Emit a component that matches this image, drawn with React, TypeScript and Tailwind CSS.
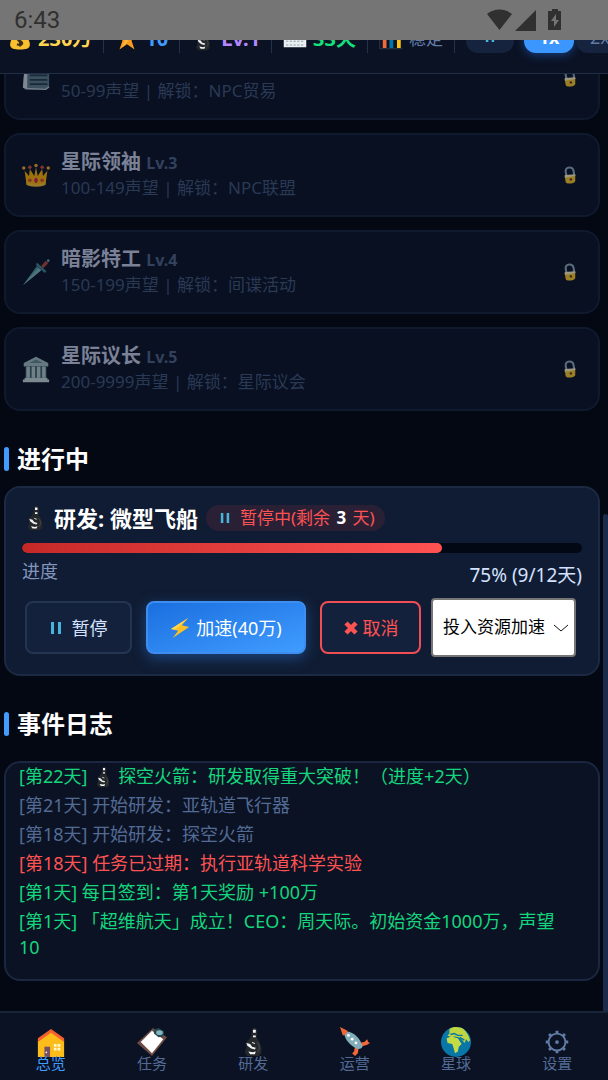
import React from 'react';

type IconProps = { className?: string };

const MoneyBagIcon: React.FC<IconProps> = ({ className }) => (
  <svg viewBox="0 0 32 32" className={className} aria-hidden="true">
    <path d="M11 3h10l-2 6h-6z" fill="#f9a825" />
    <path d="M13 8h6c7 5 11 11 10 17-1 4-5 5-13 5S4 29 3 25C2 19 6 13 13 8z" fill="#fbc02d" />
    <path d="M19 15c-5-3-8 3-3 4s3 7-4 4M16 12v14" stroke="#3e2f1c" strokeWidth="3" fill="none" />
  </svg>
);

const StarIcon: React.FC<IconProps> = ({ className }) => (
  <svg viewBox="0 0 32 32" className={className} aria-hidden="true">
    <path d="M16 2l4 10h9l-7 6 4 12-10-7-10 7 4-12-7-6h9z" fill="#fb9a1c" />
    <path d="M16 8l2 8-2 5-7 6 4-9z" fill="#ffb840" />
  </svg>
);

const MicroscopeIcon: React.FC<IconProps> = ({ className }) => (
  <svg viewBox="0 0 32 32" className={className} aria-hidden="true">
    <path d="M16 1h3l2 3-1 7 3 5 2 6v6l-3 3H10l-3-4 2-5-1-5 4-4 2-4 1-6z" fill="#25282b" />
    <path d="M16 3h3v3h-3zM16 9h3v2h-3z" fill="#f5f5f5" />
    <path d="M9 17l4 1 2 3 4 1-1 2-4-1-4-3z" fill="#eceff1" />
    <path d="M15 16l3 1v1l-3-1zM11 26l5 1 3-1-1 3h-5z" fill="#f5f5f5" />
    <path d="M20 16c4 4 3 8 1 11" stroke="#4a4f52" strokeWidth="1" fill="none" />
  </svg>
);

const CalendarIcon: React.FC<IconProps> = ({ className }) => (
  <svg viewBox="0 0 32 32" className={className} aria-hidden="true">
    <rect x="1" y="4" width="30" height="23" fill="#eceff1" />
    <rect x="1" y="4" width="30" height="5" fill="#e53935" />
    <path d="M4 19h24M4 24h24" stroke="#90a4ae" strokeWidth="1.5" strokeDasharray="3 2" />
  </svg>
);

const ChartIcon: React.FC<IconProps> = ({ className }) => (
  <svg viewBox="0 0 32 32" className={className} aria-hidden="true">
    <path d="M1 3v26h30" stroke="#37474f" strokeWidth="1" fill="none" />
    <rect x="5" y="10" width="5" height="18" fill="#f4693b" />
    <rect x="14" y="5" width="5" height="23" fill="#0277a8" />
    <rect x="24" y="13" width="5" height="15" fill="#fcc21b" />
  </svg>
);

const NewspaperIcon: React.FC<IconProps> = ({ className }) => (
  <svg viewBox="0 0 32 32" className={className} aria-hidden="true">
    <path d="M3 2h28v25l-3 2H5l-4-2z" fill="#5c7b88" />
    <path d="M3 3h3v25l-5-1z" fill="#cfd8dc" />
    <path d="M9 8h20M9 13h20M9 18h20M9 23h20" stroke="#263b45" strokeWidth="2" />
    <path d="M3 28l24 1 4-3" stroke="#b9c8ce" strokeWidth="1.5" fill="none" />
  </svg>
);

const CrownIcon: React.FC<IconProps> = ({ className }) => (
  <svg viewBox="0 0 32 32" className={className} aria-hidden="true">
    <path d="M3 11l5 6 1-8 5 8 2-10 2 10 5-8 1 8 5-6-2 15c-4 4-18 4-22 0z" fill="#ffb300" />
    <path d="M5 24c5 3 17 3 22 0v3c-4 3-18 3-22 0z" fill="#f6c02c" />
    <g fill="#f9a825">
      <circle cx="2" cy="8" r="2" />
      <circle cx="16" cy="5" r="2" />
      <circle cx="30" cy="8" r="2" />
    </g>
    <g fill="#d84b32">
      <circle cx="9" cy="7" r="2" />
      <circle cx="23" cy="7" r="2" />
      <circle cx="9" cy="22" r="2" />
      <circle cx="23" cy="22" r="2" />
    </g>
    <ellipse cx="16" cy="22" rx="2" ry="3" fill="#d81b60" />
  </svg>
);

const DaggerIcon: React.FC<IconProps> = ({ className }) => (
  <svg viewBox="0 0 32 32" className={className} aria-hidden="true">
    <path d="M1 31L17 9l5 5z" fill="#4f9599" />
    <path d="M1 31l18-20 3 3z" fill="#82b8bc" />
    <path d="M17 5l11 10-2 2L16 8z" fill="#3f8790" />
    <path d="M22 9l5-6 3 3-6 6z" fill="#b7473a" />
    <circle cx="30" cy="3" r="1.5" fill="#6da7ad" />
  </svg>
);

const TempleIcon: React.FC<IconProps> = ({ className }) => (
  <svg viewBox="0 0 32 32" className={className} aria-hidden="true">
    <path d="M16 2l14 7v4H2V9z" fill="#a5c0c2" />
    <path d="M16 5l8 4H8z" fill="#66898c" />
    <path d="M4 13h24v13H4z" fill="#3f5e63" />
    <path d="M5 13h4v13H5zM11 13h4v13h-4zM17 13h4v13h-4zM23 13h4v13h-4z" fill="#b6cdcf" />
    <path d="M3 26h26v2h2v3H1v-3h2z" fill="#c6d8da" />
  </svg>
);

const LockIcon: React.FC<IconProps> = ({ className }) => (
  <svg viewBox="0 0 16 20" className={className} aria-hidden="true">
    <path d="M4 11L3 6c0-6 8-6 9-1l1 6" stroke="#8fa9ba" strokeWidth="2.4" fill="none" />
    <path d="M2 11l12-1v7c-1 3-10 4-11 1z" fill="#ffc928" />
    <path d="M2 10l12-1v2L2 13z" fill="#fff3c0" />
    <circle cx="9" cy="15" r="1.4" fill="#4e3b10" />
  </svg>
);

const PauseIcon: React.FC<IconProps> = ({ className }) => (
  <svg viewBox="0 0 12 14" className={className} aria-hidden="true">
    <path d="M1 1h3v12H1zM8 1h3v12H8z" fill="#45b5dc" />
  </svg>
);

const BoltIcon: React.FC<IconProps> = ({ className }) => (
  <svg viewBox="0 0 22 24" className={className} aria-hidden="true">
    <path d="M20 1L1 13l8 2-6 8 18-12-8-2z" fill="#fdbf24" />
    <path d="M20 1L1 13l5 1z" fill="#ffd54f" />
  </svg>
);

const CrossIcon: React.FC<IconProps> = ({ className }) => (
  <svg viewBox="0 0 16 16" className={className} aria-hidden="true">
    <path d="M3 3l10 10M13 3L3 13" stroke="#ff5252" strokeWidth="4.5" />
  </svg>
);

const HomeIcon: React.FC<IconProps> = ({ className }) => (
  <svg viewBox="0 0 32 32" className={className} aria-hidden="true">
    <path d="M2 15L16 3l14 12v17H2z" fill="#fcbc19" />
    <path d="M2 16V12L16 2l14 10v4L16 6z" fill="#f4612e" />
    <path d="M9 21h6v11H9z" fill="#795061" />
    <circle cx="11" cy="27" r="0.9" fill="#fff" />
    <path d="M19 18h3v3h-3zM23 18h3v3h-3zM19 22h3v3h-3zM23 22h3v3h-3z" fill="#fff8c9" />
  </svg>
);

const ClipboardIcon: React.FC<IconProps> = ({ className }) => (
  <svg viewBox="0 0 32 32" className={className} aria-hidden="true">
    <path d="M17 1l15 10-16 20L0 17z" fill="#6e4c45" />
    <path d="M16 4l12 9-12 15L4 16z" fill="#fff" />
    <path d="M18 3l5-2 6 4-1 5-5 1-5-4z" fill="#264850" />
    <ellipse cx="24" cy="6" rx="3.5" ry="2.5" fill="#83b5bf" />
  </svg>
);

const RocketIcon: React.FC<IconProps> = ({ className }) => (
  <svg viewBox="0 0 32 32" className={className} aria-hidden="true">
    <path d="M20 17l6-1 3-3 1 3 2 1-3 2-7 2zM16 21l-1 5-2 2 3 3 3-3 1-6z" fill="#f4693b" />
    <path d="M4 5c8-2 18 6 20 16-2 3-5 3-8 1C8 17 5 12 4 5z" fill="#82aeba" />
    <path d="M0 0l8 4c0 3-2 4-5 5z" fill="#ee6639" />
    <g fill="#fff">
      <circle cx="9" cy="9" r="1.5" />
      <circle cx="13" cy="13" r="1.5" />
      <circle cx="17" cy="17" r="1.5" />
    </g>
  </svg>
);

const GlobeIcon: React.FC<IconProps> = ({ className }) => (
  <svg viewBox="0 0 32 32" className={className} aria-hidden="true">
    <circle cx="16" cy="16" r="16" fill="#0877a8" />
    <path d="M9 2c5-3 11-2 15 0 3 3 6 7 7 12l-2 2-2-3-2 4-3-4-3-2-4-1-4 1-4-2 2-2z" fill="#bfd641" />
    <path d="M6 12l5-2 7 2 4 6-3 3-1 5-3 2-2-7-1-3-5-1z" fill="#c4dc43" />
    <path d="M10 8l4-1 4 2h5M20 11l5 3" stroke="#0877a8" strokeWidth="1.4" fill="none" />
  </svg>
);

const GearIcon: React.FC<IconProps> = ({ className }) => (
  <svg viewBox="0 0 32 32" className={className} aria-hidden="true" stroke="#617ba5" fill="none">
    <circle cx="16" cy="16" r="9" strokeWidth="2" />
    <circle cx="16" cy="16" r="2" fill="#617ba5" stroke="none" />
    <path
      d="M16 7V4M16 25v3M7 16H4M25 16h3M9.6 9.6L7.5 7.5M22.4 9.6l2.1-2.1M9.6 22.4l-2.1 2.1M22.4 22.4l2.1 2.1"
      strokeWidth="3"
    />
  </svg>
);

const StatusBar: React.FC = () => (
  <div className="flex h-10 shrink-0 items-center justify-between bg-[#757575] pr-[45px] pl-3.5">
    <span className="font-[Roboto,sans-serif] text-2xl text-[#303030]">6:43</span>
    <svg viewBox="0 0 76 24" className="h-6 w-[76px]" fill="#303030" aria-hidden="true">
      <path d="M0 6C7 0 18 0 25 6L12.5 22z" />
      <path d="M28 23L49 2v21z" />
      <path d="M61 3h4V1h6v2h3v19H61z" />
      <path d="M69 6l-5 7h3v6l5-7h-3z" fill="#757575" />
    </svg>
  </div>
);

const stats = [
  { Icon: MoneyBagIcon, value: '230万', style: 'text-xl font-bold text-[#ffd54f]' },
  { Icon: StarIcon, value: '10', style: 'text-xl font-bold text-[#409cff]' },
  { Icon: MicroscopeIcon, value: 'Lv.1', style: 'text-xl font-bold text-[#b388ff]' },
  { Icon: CalendarIcon, value: '33天', style: 'text-xl font-bold text-[#14e07c]' },
  { Icon: ChartIcon, value: '稳定', style: 'text-[17px] text-[#617ba5]' },
];

const ResourceBar: React.FC = () => (
  <header className="flex h-[34px] shrink-0 items-end overflow-hidden border-b border-[#1f2d47] bg-[#0b1224] pb-5 pl-2">
    {stats.map(({ Icon, value, style }) => (
      <div key={value} className="mr-[11px] flex shrink-0 items-center gap-1.5 border-r border-[#24324c] pr-[11px]">
        <Icon className="size-6" />
        <span className={`leading-7 whitespace-nowrap ${style}`}>{value}</span>
      </div>
    ))}
    <button aria-label="暂停" className="mr-2.5 flex h-8 w-12 shrink-0 items-center justify-center rounded-xl bg-[#16233f]">
      <PauseIcon className="h-3 w-2.5" />
    </button>
    <button className="mr-0.5 h-8 w-[50px] shrink-0 rounded-xl bg-[#3b96ff] text-lg font-bold text-white shadow-[0_2px_10px_#153f7c]">
      1x
    </button>
    <button className="h-8 w-12 shrink-0 rounded-xl bg-[#16233f] text-lg text-[#617ba5]">2x</button>
  </header>
);

const ranks = [
  { Icon: NewspaperIcon, name: '贸易伙伴', level: 'Lv.2', info: '50-99声望 | 解锁：NPC贸易' },
  { Icon: CrownIcon, name: '星际领袖', level: 'Lv.3', info: '100-149声望 | 解锁：NPC联盟' },
  { Icon: DaggerIcon, name: '暗影特工', level: 'Lv.4', info: '150-199声望 | 解锁：间谍活动' },
  { Icon: TempleIcon, name: '星际议长', level: 'Lv.5', info: '200-9999声望 | 解锁：星际议会' },
];

const RankCard: React.FC<(typeof ranks)[number]> = ({ Icon, name, level, info }) => (
  <li className="flex items-center gap-[11px] rounded-2xl border-2 border-[#101a2e] bg-[#081022] px-4 py-3.5">
    <Icon className="size-7 opacity-60" />
    <div className="flex-1">
      <h3 className="text-xl leading-[26px] font-bold text-[#7b8196]">
        {name} <span className="text-base text-[#33415c]">{level}</span>
      </h3>
      <p className="text-[17px] leading-[26px] text-[#2a3954]">{info}</p>
    </div>
    <LockIcon className="mr-[5px] h-5 w-3.5 opacity-60" />
  </li>
);

const SectionTitle: React.FC<{ children: React.ReactNode }> = ({ children }) => (
  <h2 className="flex items-center gap-2 text-2xl leading-6 font-bold text-white">
    <span className="h-6 w-[5px] rounded-sm bg-[#409cff]" />
    {children}
  </h2>
);

const ResearchCard: React.FC = () => {
  const done = 9;
  const total = 12;

  return (
    <section className="mt-[15px] rounded-2xl border-2 border-[#1b2942] bg-[#101c33] px-4 pt-4 pb-[17px]">
      <div className="flex items-center">
        <MicroscopeIcon className="size-[26px]" />
        <h3 className="ml-1.5 text-[22px] leading-7 font-bold text-white">研发: 微型飞船</h3>
        <span className="ml-2 flex h-[26px] items-center rounded-full bg-[#2a2036] pr-2.5 pl-3.5 text-[17px] whitespace-pre text-[#ff5252]">
          <PauseIcon className="mr-2.5 h-3 w-2.5" />
          暂停中(剩余 <b className="mx-0.5 text-white">3</b> 天)
        </span>
      </div>
      <div className="mt-[11px] h-2.5 overflow-hidden rounded-full bg-[#030914]">
        <div
          className="h-full rounded-full bg-linear-to-r from-[#c62828] to-[#ff5252]"
          style={{ width: `${(done / total) * 100}%` }}
        />
      </div>
      <div className="mt-1 flex items-start justify-between text-lg leading-7">
        <span className="text-[#8296bd]">进度</span>
        <span className="mt-1 text-[19px] leading-7 text-[#d4e2ff]">
          75% ({done}/{total}天)
        </span>
      </div>
      <div className="mt-[9px] flex items-center gap-2.5 pl-[3px] text-lg">
        <div className="flex gap-3.5">
          <button className="flex h-[53px] w-[107px] items-center justify-center gap-2.5 rounded-lg border-2 border-[#243552] bg-[#14213c] text-[#d4e2ff]">
            <PauseIcon className="h-3.5 w-3" />
            暂停
          </button>
          <button className="flex h-[53px] w-40 items-center justify-center gap-1.5 rounded-lg border-2 border-[#3d8ef0] bg-linear-to-br from-[#1a6fdf] to-[#409cff] text-white shadow-[0_4px_14px_#1c467f]">
            <BoltIcon className="h-6 w-5" />
            加速(40万)
          </button>
          <button className="flex h-[53px] w-[101px] items-center justify-center gap-1 rounded-lg border-2 border-[#f04d55] bg-[#14213c] text-[#ff5252]">
            <CrossIcon className="size-4" />
            取消
          </button>
        </div>
        <div className="relative">
          <select
            aria-label="投入资源加速"
            className="h-[59px] w-[145px] appearance-none rounded-sm border-2 border-[#767676] bg-white pl-2.5 text-[17px] text-black"
          >
            <option>投入资源加速</option>
          </select>
          <svg
            viewBox="0 0 14 8"
            className="pointer-events-none absolute top-1/2 right-2 h-2 w-3.5 -translate-y-1/2"
            fill="none"
            stroke="#111"
            aria-hidden="true"
          >
            <path d="M0 1l7 6 7-6" />
          </svg>
        </div>
      </div>
    </section>
  );
};

const logs = [
  { day: 22, text: '探空火箭：研发取得重大突破！（进度+2天）', tone: 'text-[#14d67c]', research: true },
  { day: 21, text: '开始研发：亚轨道飞行器', tone: 'text-[#536b94]' },
  { day: 18, text: '开始研发：探空火箭', tone: 'text-[#536b94]' },
  { day: 18, text: '任务已过期：执行亚轨道科学实验', tone: 'text-[#ff5252]' },
  { day: 1, text: '每日签到：第1天奖励 +100万', tone: 'text-[#14d67c]' },
  { day: 1, text: '「超维航天」成立！CEO：周天际。初始资金1000万，声望10', tone: 'text-[#14d67c]' },
];

const EventLog: React.FC = () => (
  <ul className="mt-[25px] flex flex-col gap-[3px] rounded-2xl border-2 border-[#1b2740] bg-[#0b1224] pr-7 pb-[19px] pl-[13px]">
    {logs.map(({ day, text, tone, research }) => (
      <li key={text} className={`text-lg leading-[26px] ${tone}`}>
        [第{day}天] {research && <MicroscopeIcon className="mr-1 inline size-[22px] align-text-bottom" />}
        {text}
      </li>
    ))}
  </ul>
);

const tabs = [
  { Icon: HomeIcon, label: '总览' },
  { Icon: ClipboardIcon, label: '任务' },
  { Icon: MicroscopeIcon, label: '研发' },
  { Icon: RocketIcon, label: '运营' },
  { Icon: GlobeIcon, label: '星球' },
  { Icon: GearIcon, label: '设置' },
];

const BottomNav: React.FC = () => (
  <nav className="grid h-[69px] shrink-0 grid-cols-6 border-t-2 border-[#18243a] bg-[#0b1224]">
    {tabs.map(({ Icon, label }, i) => (
      <a
        key={label}
        href="#"
        className={`flex flex-col items-center pt-3.5 text-[15px] leading-5 ${i === 0 ? 'text-[#409cff]' : 'text-[#536b94]'}`}
      >
        <Icon className="size-[30px]" />
        <span className="-mt-1">{label}</span>
      </a>
    ))}
  </nav>
);

const App: React.FC = () => (
  <div className="flex h-screen flex-col overflow-hidden bg-[#030812] font-['Noto_Sans','Noto_Sans_CJK_SC',sans-serif]">
    <StatusBar />
    <ResourceBar />
    <main className="flex min-h-0 flex-1 overflow-hidden">
      <div className="-mt-[38px] min-w-0 flex-1 pr-[3px] pl-1">
        <ul className="flex flex-col gap-[13px]">
          {ranks.map((rank) => (
            <RankCard key={rank.level} {...rank} />
          ))}
        </ul>
        <div className="mt-9">
          <SectionTitle>进行中</SectionTitle>
          <ResearchCard />
        </div>
        <div className="mt-9">
          <SectionTitle>事件日志</SectionTitle>
          <EventLog />
        </div>
      </div>
      <div className="flex w-[5px] flex-col justify-end">
        <div className="h-[53%] rounded-t-sm bg-[#1b2b4b]" />
      </div>
    </main>
    <BottomNav />
  </div>
);

export default App;
